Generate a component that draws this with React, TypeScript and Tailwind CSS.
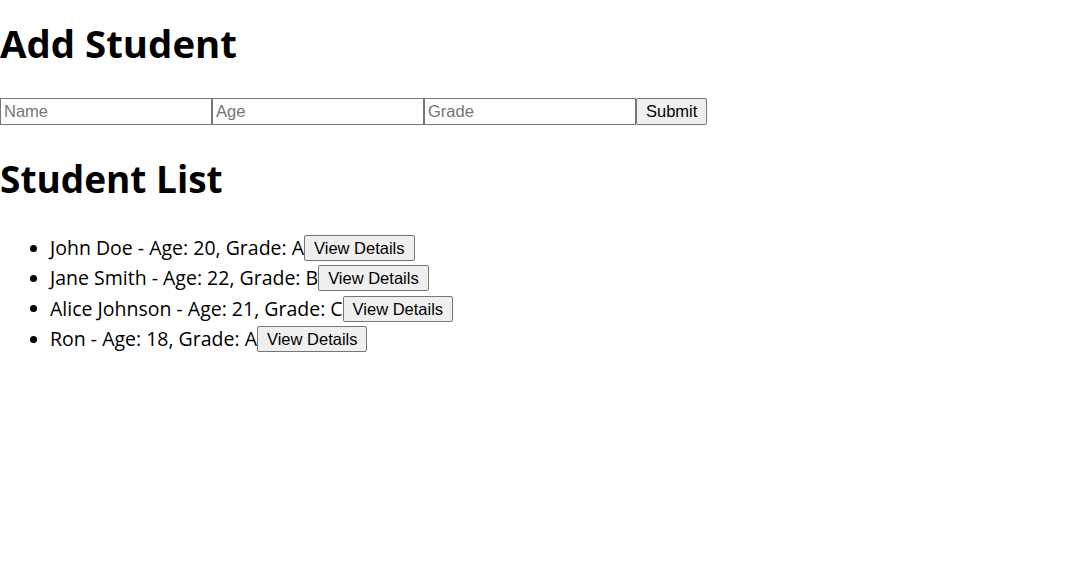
import React from "react";

const students = [
  { name: "John Doe", age: 20, grade: "A" },
  { name: "Jane Smith", age: 22, grade: "B" },
  { name: "Alice Johnson", age: 21, grade: "C" },
  { name: "Ron", age: 18, grade: "A" },
];

const ctrl = "font-['Liberation_Sans',Arial,sans-serif] text-[16.5px]";

export default function App() {
  return (
    <div className="bg-white text-black min-h-[570px] font-['Open_Sans','Noto_Sans',sans-serif]">
      <h1 className="pt-[20px] text-[38.4px] font-bold leading-[46px]">Add Student</h1>
      <div className="mt-[32px] flex h-[27px]">
        {["Name", "Age", "Grade"].map((p) => (
          <input
            key={p}
            placeholder={p}
            className={`${ctrl} w-[212px] h-[27px] border border-[#767676] px-[3px] outline-none placeholder:text-[#757575] text-black`}
          />
        ))}
        <button
          className={`${ctrl} h-[27px] px-[9px] border border-[#767676] rounded-[2px] bg-[#efefef] text-black`}
        >
          Submit
        </button>
      </div>
      <h1 className="mt-[31px] text-[37px] font-bold leading-[46px]">Student List</h1>
      <ul className="mt-[31px]">
        {students.map((s) => (
          <li key={s.name} className="flex items-center h-[30.33px] text-[19.5px]">
            <span className="ml-[30px] w-[7px] h-[7px] rounded-full bg-black" />
            <span className="ml-[13px] leading-[26px] whitespace-pre">
              {`${s.name} - Age: ${s.age}, Grade: ${s.grade}`}
            </span>
            <button
              className={`${ctrl} h-[26px] px-[9px] border border-[#767676] rounded-[2px] bg-[#efefef] text-black`}
            >
              View Details
            </button>
          </li>
        ))}
      </ul>
    </div>
  );
}
